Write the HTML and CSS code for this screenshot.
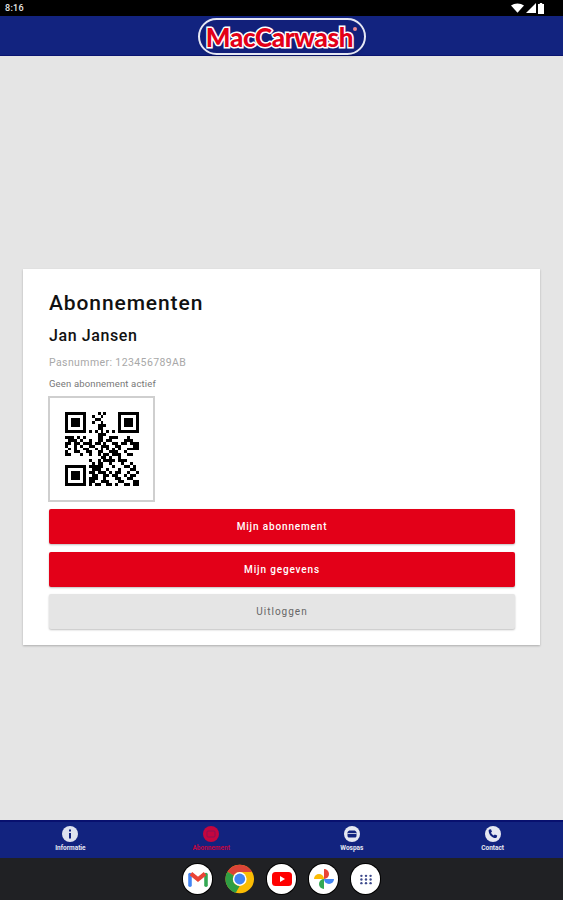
FILE: index.html
```html
<!DOCTYPE html>
<html lang="nl">
<head>
    <meta charset="UTF-8">
    <title>MacCarwash</title>
    <link rel="stylesheet" href="styles.css">
</head>

<body>
    <div class="statusbar">
        <span class="time">8:16</span>
        <div class="status-icons">
            <svg width="13" height="10" viewBox="0 0 14 10"><path d="M0 2.2C4 -.7 10 -.7 14 2.2L7 10z" fill="#fff"/></svg>
            <svg width="10" height="10" viewBox="0 0 10 10"><path d="M10 0V10H0z" fill="#fff"/></svg>
            <svg width="6" height="11" viewBox="0 0 6 11"><path d="M1.8 0h2.4v1H6v10H0V1h1.8z" fill="#fff"/></svg>
        </div>
    </div>

    <header class="topbar">
        <div class="logo"><span class="logo-text">MacCarwash</span><span class="logo-reg"></span></div>
    </header>

    <main class="content">
        <section class="card">
            <h1>Abonnementen</h1>
            <h2>Jan Jansen</h2>
            <p class="pasnummer">Pasnummer: 123456789AB</p>
            <p class="status">Geen abonnement actief</p>
            <div class="qr">
                <svg width="74" height="74" viewBox="0 0 25 25" shape-rendering="crispEdges">
                    <path fill="none" stroke="#000" d="M0 .5H7M11 .5H12M13 .5H14M18 .5H25
                    M0 1.5H1M6 1.5H7M9 1.5H10M12 1.5H13M18 1.5H19M24 1.5H25
                    M0 2.5H1M2 2.5H5M6 2.5H7M10 2.5H12M18 2.5H19M20 2.5H23M24 2.5H25
                    M0 3.5H1M2 3.5H5M6 3.5H7M9 3.5H10M12 3.5H13M18 3.5H19M20 3.5H23M24 3.5H25
                    M0 4.5H1M2 4.5H5M6 4.5H7M11 4.5H14M18 4.5H19M20 4.5H23M24 4.5H25
                    M0 5.5H1M6 5.5H7M11 5.5H13M18 5.5H19M24 5.5H25
                    M0 6.5H7M8 6.5H9M10 6.5H11M12 6.5H13M14 6.5H15M16 6.5H17M18 6.5H25
                    M11 7.5H14
                    M0 8.5H3M4 8.5H5M6 8.5H7M11 8.5H13M15 8.5H18M21 8.5H22
                    M1 9.5H4M5 9.5H6M8 9.5H9M11 9.5H13M14 9.5H16M20 9.5H23
                    M0 10.5H2M3 10.5H5M6 10.5H9M10 10.5H12M13 10.5H14M16 10.5H18M19 10.5H21M22 10.5H25
                    M0 11.5H1M3 11.5H4M5 11.5H6M8 11.5H10M12 11.5H15M17 11.5H19M23 11.5H25
                    M1 12.5H2M3 12.5H4M6 12.5H8M10 12.5H11M12 12.5H13M14 12.5H15M16 12.5H17M18 12.5H19M21 12.5H25
                    M0 13.5H1M3 13.5H5M7 13.5H9M11 13.5H13M15 13.5H18M20 13.5H21
                    M0 14.5H2M5 14.5H6M8 14.5H9M11 14.5H12M13 14.5H15M16 14.5H19M21 14.5H23
                    M12 15.5H14M15 15.5H16M18 15.5H19
                    M8 16.5H9M11 16.5H12M13 16.5H17M18 16.5H21
                    M9 17.5H10M11 17.5H13M15 17.5H16M19 17.5H20M22 17.5H23
                    M0 18.5H7M8 18.5H13M16 18.5H17M20 18.5H22M23 18.5H24
                    M0 19.5H1M6 19.5H7M9 19.5H12M14 19.5H15M18 19.5H19M22 19.5H24
                    M0 20.5H1M2 20.5H5M6 20.5H7M8 20.5H10M11 20.5H14M15 20.5H16M17 20.5H19M21 20.5H22M24 20.5H25
                    M0 21.5H1M2 21.5H5M6 21.5H7M9 21.5H11M13 21.5H15M16 21.5H18M20 21.5H21M22 21.5H24
                    M0 22.5H1M2 22.5H5M6 22.5H7M8 22.5H11M13 22.5H14M17 22.5H19M21 22.5H23
                    M0 23.5H1M6 23.5H7M8 23.5H10M12 23.5H15M18 23.5H20M23 23.5H25
                    M0 24.5H7M8 24.5H9M10 24.5H12M14 24.5H16M17 24.5H18M20 24.5H22M23 24.5H25"/>
                </svg>
            </div>
            <div class="buttons">
                <a class="btn btn-red">Mijn abonnement</a>
                <a class="btn btn-red">Mijn gegevens</a>
                <a class="btn btn-grey">Uitloggen</a>
            </div>
        </section>
    </main>

    <nav class="tabs">
        <div class="tab">
            <svg width="16" height="16" viewBox="0 0 16 16"><circle cx="8" cy="8" r="8" fill="#dfe2ef"/><rect x="7" y="7" width="2" height="5.5" fill="#12237f"/><rect x="7" y="3.5" width="2" height="2" fill="#12237f"/></svg>
            <span>Informatie</span>
        </div>
        <div class="tab tab-active">
            <svg width="16" height="16" viewBox="0 0 16 16"><circle cx="8" cy="8" r="8" fill="#c4063f"/><rect x="4" y="5" width="8" height="6" rx="1" fill="none" stroke="#8a0f55"/></svg>
            <span>Abonnement</span>
        </div>
        <div class="tab">
            <svg width="16" height="16" viewBox="0 0 16 16"><circle cx="8" cy="8" r="8" fill="#e6e8f2"/><path d="M3.5 6.5C4 5 5 4.500 6 4.500h4c1 0 2 .5 2.500 2v3.500c0 .8-.7 1.500-1.500 1.500H5c-.8 0-1.500-.7-1.500-1.500z" fill="#12237f"/><rect x="3.500" y="7" width="9" height=".8" fill="#e6e8f2"/></svg>
            <span>Wospas</span>
        </div>
        <div class="tab">
            <svg width="16" height="16" viewBox="0 0 16 16"><circle cx="8" cy="8" r="8" fill="#e6e8f2"/><path d="M4.300 3.600l1.700-.4 1 2.500-1 .9c.5 1.300 1.500 2.300 2.800 2.900l1-1 2.400 1-.4 1.800c-.2.500-.6.700-1.100.7C7 12 4 9 3.600 4.700c0-.5.200-.9.700-1.100z" fill="#12237f"/></svg>
            <span>Contact</span>
        </div>
    </nav>

    <footer class="dock">
        <div class="app">
            <svg width="20" height="16" viewBox="0 0 22 18">
                <path d="M2 16V4" stroke="#4285f4" stroke-width="4" stroke-linecap="round"/>
                <path d="M20 16V4" stroke="#34a853" stroke-width="4" stroke-linecap="round"/>
                <path d="M3 3L11 9.500 19 3" fill="none" stroke="#ea4335" stroke-width="4.600"/>
            </svg>
        </div>
        <div class="app app-chrome">
            <svg width="30" height="30" viewBox="0 0 30 30">
                <circle cx="15" cy="15" r="14.500" fill="#fbbc04"/>
                <path d="M15 .5A14.500 14.500 0 0 1 27.600 8H15a7 7 0 0 0-6.100 3.500L2.500 7.600A14.500 14.500 0 0 1 15 .5z" fill="#db4437"/>
                <path d="M2.500 7.600l6.400 3.900 0 0a7 7 0 0 0 6 10.500l-3.900 7A14.500 14.500 0 0 1 2.500 7.600z" fill="#2f9e44"/>
                <circle cx="15" cy="15" r="7" fill="#fff"/>
                <circle cx="15" cy="15" r="5.500" fill="#4285f4"/>
            </svg>
        </div>
        <div class="app">
            <svg width="20" height="14" viewBox="0 0 20 14"><rect width="20" height="14" rx="3.500" fill="#f00"/><path d="M8 4l5 3-5 3z" fill="#fff"/></svg>
        </div>
        <div class="app">
            <svg width="22" height="22" viewBox="0 0 22 22">
                <path d="M11 11V1a5 5 0 0 1 0 10z" fill="#ea4335"/>
                <path d="M11 11h10a5 5 0 0 1-10 0z" fill="#4285f4"/>
                <path d="M11 11v10a5 5 0 0 1 0-10z" fill="#34a853"/>
                <path d="M11 11H1a5 5 0 0 1 10 0z" fill="#fbbc04"/>
            </svg>
        </div>
        <div class="app">
            <svg width="14" height="11" viewBox="0 0 14 12" fill="#3d4a8c">
                <circle cx="2" cy="2" r="1.300"/><circle cx="7" cy="2" r="1.300"/><circle cx="12" cy="2" r="1.300"/>
                <circle cx="2" cy="6" r="1.300"/><circle cx="7" cy="6" r="1.300"/><circle cx="12" cy="6" r="1.300"/>
                <circle cx="2" cy="10" r="1.300"/><circle cx="7" cy="10" r="1.300"/><circle cx="12" cy="10" r="1.300"/>
            </svg>
        </div>
    </footer>
</body>
</html>
```

FILE: styles.css
```css
* {
    box-sizing: border-box;
}

html, body {
    height: 100%;
}

body {
    margin: 0;
    display: flex;
    flex-direction: column;
    height: 900px;
    overflow: hidden;
    background: #e5e5e5;
    font-family: Roboto, sans-serif;
}

.statusbar {
    height: 16px;
    flex: none;
    display: flex;
    align-items: center;
    justify-content: space-between;
    padding: 0 19px 0 5px;
    background: #000;
    color: #e8e8e8;
}

.time {
    font-size: 9px;
    font-weight: 500;
    letter-spacing: .3px;
}

.status-icons {
    display: flex;
    align-items: center;
    gap: 2px;
}

.topbar {
    height: 40px;
    flex: none;
    display: flex;
    justify-content: center;
    background: #12237f;
    border-bottom: 1px solid #0a1470;
}

.logo {
    width: 168px;
    height: 37px;
    margin-top: 2px;
    display: flex;
    align-items: center;
    justify-content: center;
    border: 2px solid #e6e8f4;
    border-radius: 19px;
    background: #12207a;
    box-shadow: 0 3px 3px -1px rgba(0, 0, 0, .12);
}

.logo-text {
    color: #e30018;
    font-family: Lato, sans-serif;
    font-size: 26px;
    font-weight: 900;
    letter-spacing: -.35px;
    -webkit-text-stroke: 3px #fff;
    paint-order: stroke fill;
}

.logo-reg {
    width: 4px;
    height: 4px;
    margin: 0 0 16px 0;
    border-radius: 50%;
    background: #f08a92;
}

.content {
    flex: 1;
    display: flex;
    flex-direction: column;
    justify-content: center;
    padding: 38px 23px 0;
}

.card {
    height: 376px;
    padding: 22px 25px 0 26px;
    background: #fff;
    box-shadow: 0 1px 2px rgba(0, 0, 0, .25);
}

h1 {
    margin: 0;
    font-size: 21px;
    line-height: 25px;
    font-weight: 500;
    letter-spacing: .9px;
    color: #111;
}

h2 {
    margin: 10px 0 0;
    font-size: 16px;
    line-height: 20px;
    font-weight: 500;
    letter-spacing: .6px;
    color: #111;
}

.pasnummer {
    margin: 10px 0 0;
    font-size: 10.500px;
    line-height: 14px;
    letter-spacing: .4px;
    color: #a8a8a8;
}

.status {
    margin: 7px 0 0;
    font-size: 9.500px;
    line-height: 13px;
    letter-spacing: .15px;
    color: #777;
}

.qr {
    width: 107px;
    height: 106px;
    margin: 6px 0 0 -1px;
    display: flex;
    align-items: center;
    justify-content: center;
    border: 2px solid #cfcfcf;
}

.buttons {
    margin-top: 7px;
    display: flex;
    flex-direction: column;
    gap: 7.500px;
}

.btn {
    height: 35px;
    display: flex;
    align-items: center;
    justify-content: center;
    font-size: 10px;
    font-weight: 500;
    letter-spacing: .85px;
    border-radius: 2px;
    box-shadow: 0 1px 2px rgba(0, 0, 0, .25);
}

.btn-red {
    background: #e30018;
    color: #fff;
}

.btn-grey {
    background: #e5e5e5;
    color: #666;
    font-weight: 400;
    letter-spacing: 1px;
}

.tabs {
    height: 38px;
    flex: none;
    display: grid;
    grid-template-columns: repeat(4, 1fr);
    background: #12237f;
    border-top: 2px solid #08106f;
}

.tab {
    display: flex;
    flex-direction: column;
    align-items: center;
    padding-top: 4px;
    color: #e6e8f2;
    font-size: 6.500px;
    font-weight: 700;
    line-height: 8px;
}

.tab span {
    margin-top: 2px;
}

.tab-active {
    color: #c4063f;
}

.dock {
    height: 42px;
    flex: none;
    display: flex;
    justify-content: center;
    align-items: center;
    gap: 12.500px;
    background: #202124;
}

.app {
    width: 29.500px;
    height: 29.500px;
    display: flex;
    align-items: center;
    justify-content: center;
    border-radius: 50%;
    background: #fff;
    box-shadow: 0 0 0 1px #000;
}

.app-chrome {
    background: none;
    box-shadow: none;
}
```
